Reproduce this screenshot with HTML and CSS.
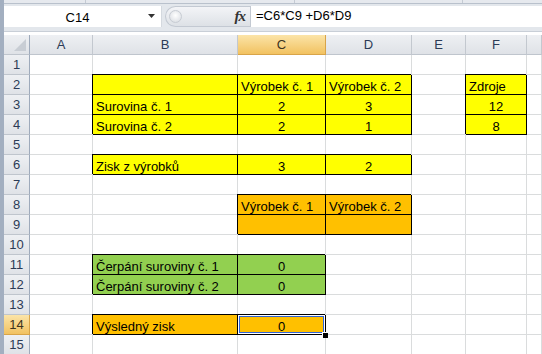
FILE: index.html
```html
<!DOCTYPE html>
<html>
<head>
  <meta charset="UTF-8">
  <title>Sešit1 - Excel</title>
  <link rel="stylesheet" href="styles.css">
</head>
<body>
  <div class="app">
    <div class="ribbon-edge">
      <span class="sep s1"></span>
      <span class="sep s2"></span>
      <span class="sep s3"></span>
    </div>

    <div class="formula-bar">
      <div class="name-box">
        <span class="name">C14</span>
        <svg class="drop" width="8" height="5" viewBox="0 0 8 5"><path d="M0 0h7l-3.5 4z" fill="#333"/></svg>
      </div>
      <div class="expander">
        <span class="dimple"></span>
        <i class="fx">fx</i>
      </div>
      <div class="formula">=C6*C9 +D6*D9</div>
    </div>

    <div class="sheet">
      <!-- column headers -->
      <div class="h corner"></div>
      <div class="h">A</div>
      <div class="h">B</div>
      <div class="h sel">C</div>
      <div class="h">D</div>
      <div class="h">E</div>
      <div class="h">F</div>
      <div class="h"></div>

      <!-- 1 -->
      <div class="h rn">1</div>
      <div class="c"></div><div class="c"></div><div class="c"></div><div class="c"></div><div class="c"></div><div class="c"></div><div class="c"></div>

      <!-- 2 -->
      <div class="h rn">2</div>
      <div class="c"></div>
      <div class="c y box"></div>
      <div class="c y box">Výrobek č. 1</div>
      <div class="c y box">Výrobek č. 2</div>
      <div class="c"></div>
      <div class="c y box">Zdroje</div>
      <div class="c"></div>

      <!-- 3 -->
      <div class="h rn">3</div>
      <div class="c"></div>
      <div class="c y box">Surovina č. 1</div>
      <div class="c y box n">2</div>
      <div class="c y box n">3</div>
      <div class="c"></div>
      <div class="c y box n">12</div>
      <div class="c"></div>

      <!-- 4 -->
      <div class="h rn">4</div>
      <div class="c"></div>
      <div class="c y box">Surovina č. 2</div>
      <div class="c y box n">2</div>
      <div class="c y box n">1</div>
      <div class="c"></div>
      <div class="c y box n">8</div>
      <div class="c"></div>

      <!-- 5 -->
      <div class="h rn">5</div>
      <div class="c"></div><div class="c"></div><div class="c"></div><div class="c"></div><div class="c"></div><div class="c"></div><div class="c"></div>

      <!-- 6 -->
      <div class="h rn">6</div>
      <div class="c"></div>
      <div class="c y box">Zisk z výrobků</div>
      <div class="c y box n">3</div>
      <div class="c y box n">2</div>
      <div class="c"></div><div class="c"></div><div class="c"></div>

      <!-- 7 -->
      <div class="h rn">7</div>
      <div class="c"></div><div class="c"></div><div class="c"></div><div class="c"></div><div class="c"></div><div class="c"></div><div class="c"></div>

      <!-- 8 -->
      <div class="h rn">8</div>
      <div class="c"></div><div class="c"></div>
      <div class="c o box">Výrobek č. 1</div>
      <div class="c o box">Výrobek č. 2</div>
      <div class="c"></div><div class="c"></div><div class="c"></div>

      <!-- 9 -->
      <div class="h rn">9</div>
      <div class="c"></div><div class="c"></div>
      <div class="c o box"></div>
      <div class="c o box"></div>
      <div class="c"></div><div class="c"></div><div class="c"></div>

      <!-- 10 -->
      <div class="h rn">10</div>
      <div class="c"></div><div class="c"></div><div class="c"></div><div class="c"></div><div class="c"></div><div class="c"></div><div class="c"></div>

      <!-- 11 -->
      <div class="h rn">11</div>
      <div class="c"></div>
      <div class="c g box">Čerpání suroviny č. 1</div>
      <div class="c g box n">0</div>
      <div class="c"></div><div class="c"></div><div class="c"></div><div class="c"></div>

      <!-- 12 -->
      <div class="h rn">12</div>
      <div class="c"></div>
      <div class="c g box">Čerpání suroviny č. 2</div>
      <div class="c g box n">0</div>
      <div class="c"></div><div class="c"></div><div class="c"></div><div class="c"></div>

      <!-- 13 -->
      <div class="h rn">13</div>
      <div class="c"></div><div class="c"></div><div class="c"></div><div class="c"></div><div class="c"></div><div class="c"></div><div class="c"></div>

      <!-- 14 -->
      <div class="h rn sel">14</div>
      <div class="c"></div>
      <div class="c o box">Výsledný zisk</div>
      <div class="c o box n active">0<span class="handle"></span></div>
      <div class="c"></div><div class="c"></div><div class="c"></div><div class="c"></div>

      <!-- 15 -->
      <div class="h rn">15</div>
      <div class="c"></div><div class="c"></div><div class="c"></div><div class="c"></div><div class="c"></div><div class="c"></div><div class="c"></div>

      <!-- 16, only its top edge shows -->
      <div class="h rn"></div>
      <div class="c"></div><div class="c"></div><div class="c"></div><div class="c"></div><div class="c"></div><div class="c"></div><div class="c"></div>
    </div>
  </div>
</body>
</html>
```

FILE: styles.css
```css
body {
  margin: 0;
  font-family: "Liberation Sans", Arial, sans-serif;
  font-size: 13px;
  color: #000;
}
.app {
  width: 542px;
  height: 354px;
  overflow: hidden;
  box-sizing: border-box;
  border-left: 4px solid #a3afc0;
  background: #fff;
}

/* strip left over from the ribbon */
.ribbon-edge {
  position: relative;
  height: 3px;
  background: #e6e9ee;
  border-bottom: 1px solid #b9c1cc;
}
.sep {
  position: absolute;
  top: 0;
  width: 1px;
  height: 3px;
  background: #c4cad3;
}
.s1 { left: 81px; }
.s2 { left: 290px; }
.s3 { left: 458px; }

/* formula bar */
.formula-bar {
  display: flex;
  align-items: center;
  height: 28px;
  box-sizing: border-box;
  background: #e3e7ec;
  border-bottom: 1px solid #c9cfd7;
}
.name-box {
  display: flex;
  align-items: center;
  width: 158px;
  height: 21px;
  margin-top: -2px;
  background: #fff;
  border-right: 1px solid #d4d9df;
  box-sizing: border-box;
}
.name {
  flex: 1;
  text-align: center;
  padding-left: 3px;
  padding-top: 1px;
}
.drop {
  margin-right: 5px;
}
.expander {
  display: flex;
  align-items: center;
  justify-content: space-between;
  width: 85px;
  height: 21px;
  margin-left: 3px;
  margin-top: -2px;
  box-sizing: border-box;
  border: 1px solid #c3c9d2;
  border-right: none;
  border-radius: 11px 0 0 11px;
  background: linear-gradient(#f3f4f7, #dde1e6);
}
.dimple {
  width: 11px;
  height: 11px;
  margin-left: 3px;
  border-radius: 50%;
  background: radial-gradient(circle at 50% 40%, #ffffff, #d5d9df);
  border: 1px solid #c7ccd3;
}
.fx {
  font-family: "Liberation Serif", serif;
  font-weight: bold;
  font-size: 15px;
  color: #333;
  margin-right: 5px;
  letter-spacing: -1px;
}
.formula {
  flex: 1;
  height: 21px;
  margin-top: -2px;
  padding: 2px 0 0 5px;
  box-sizing: border-box;
  background: #fff;
  border-left: 1px solid #c3c9d2;
}

/* worksheet */
.sheet {
  display: grid;
  grid-template-columns: 26px 63px 145px 88px 86px 54px 61px 1fr;
  grid-auto-rows: 20px;
  margin-top: 3px;
}
.h {
  box-sizing: border-box;
  background: linear-gradient(#eef0f3, #dfe2e7);
  border-right: 1px solid #c3c8cf;
  border-bottom: 1px solid #bfc5cd;
  color: #2c3b56;
  text-align: center;
  line-height: 19px;
}
.h.rn {
  border-right-color: #9eaabb;
}
.h.sel {
  background: linear-gradient(#fbe4a8, #f2c261);
  border-bottom-color: #d8a449;
  border-right-color: #d8a449;
  color: #3c3320;
}
.corner {
  position: relative;
  border-right-color: #9eaabb;
}
.corner::after {
  content: "";
  position: absolute;
  right: 3px;
  bottom: 3px;
  border-style: solid;
  border-width: 0 0 12px 12px;
  border-color: transparent transparent #c8cdd4 transparent;
}
.c {
  box-sizing: border-box;
  background: #fff;
  border-right: 1px solid #dadcdd;
  border-bottom: 1px solid #dadcdd;
  padding: 2px 3px 0;
  line-height: 19px;
  white-space: nowrap;
}
.n {
  text-align: center;
}
.y { background: #ffff00; }
.o { background: #ffc000; }
.g { background: #92d050; }
.box {
  border-right-color: #000;
  border-bottom-color: #000;
  box-shadow: -1px -1px 0 #000;
}
.active {
  position: relative;
  box-shadow: -1px -1px 0 #000, inset 0 0 0 1px #fff, inset 0 0 0 2px #2f63d6;
}
.handle {
  position: absolute;
  right: -3px;
  bottom: -4px;
  width: 5px;
  height: 5px;
  background: #000;
  border: 1px solid #fff;
  border-right: none;
  border-bottom: none;
}
```
